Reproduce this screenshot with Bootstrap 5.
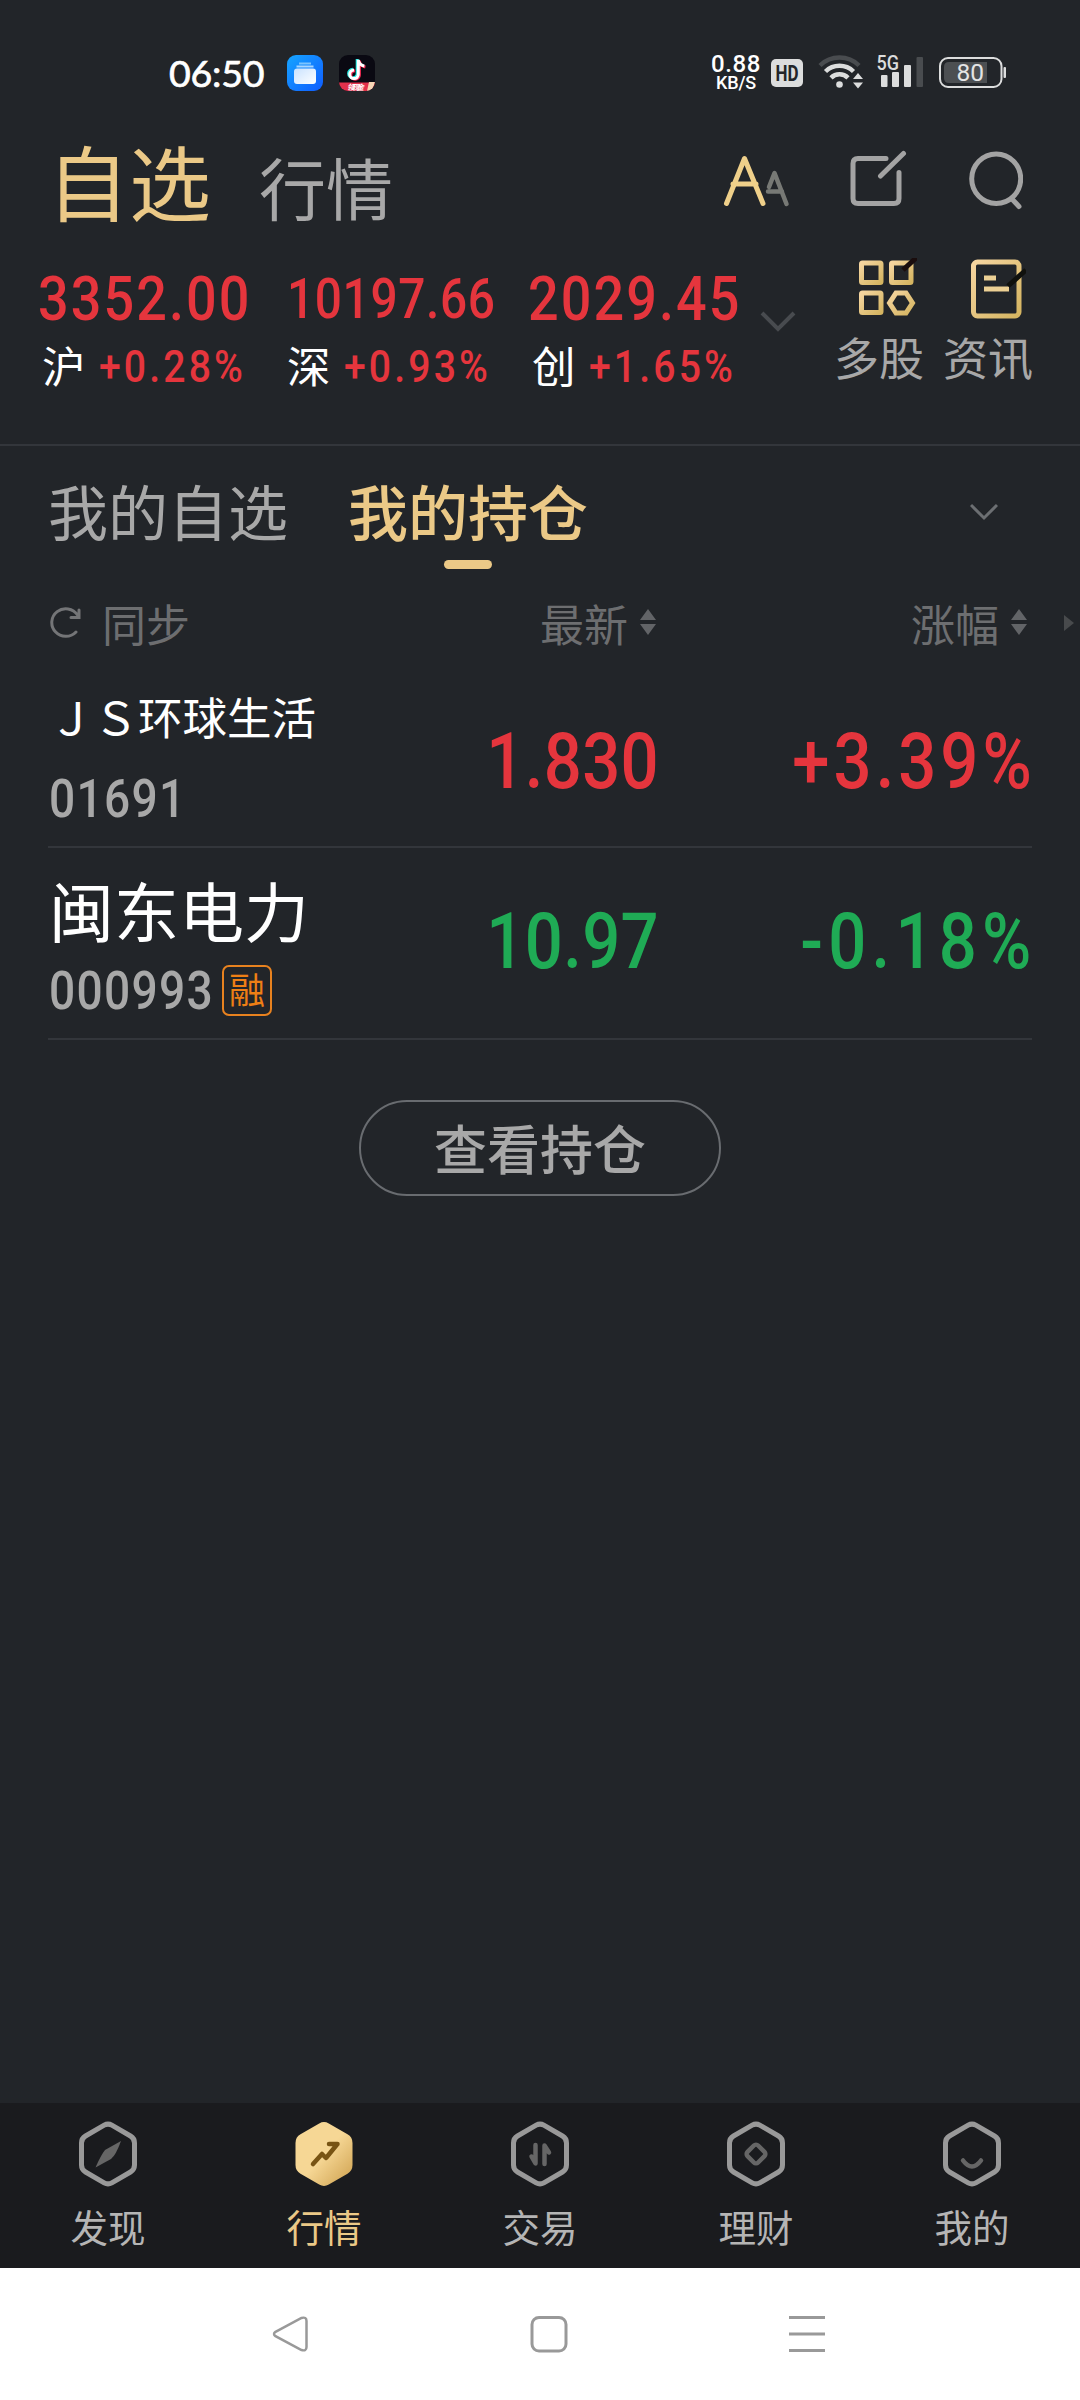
<!DOCTYPE html>
<html lang="zh-CN">
<head>
<meta charset="utf-8">
<meta name="viewport" content="width=device-width, initial-scale=1">
<title>自选</title>
<link href="https://cdn.jsdelivr.net/npm/bootstrap@5.3.0/dist/css/bootstrap.min.css" rel="stylesheet">
<script src="https://cdn.jsdelivr.net/npm/bootstrap@5.3.0/dist/js/bootstrap.bundle.min.js"></script>
<style>
:root{--gold:#ebc987;--grey:#a8a8a8;--dim:#6d6e70;--up:#e5353d;--down:#1fab55;--rule:#33363b}
body{width:1080px;height:2400px;background:#222529;color:#fff;font-family:"Noto Sans CJK SC",sans-serif;line-height:1;overflow:hidden}
svg{display:block;flex:none}
/* condensed figures */
.num{display:block;font-family:Roboto,"Liberation Sans",sans-serif;font-weight:500;white-space:nowrap;transform:scaleX(.87);transform-origin:left}
.up{color:var(--up)}.down{color:var(--down)}.gold{color:var(--gold)}.soft{color:var(--grey)}.faint{color:var(--dim)}
.status{height:120px;padding:25px 74px 0 169px}
.clock{font:400 37.5px Lato,sans-serif;width:118px;letter-spacing:-.2px;-webkit-text-stroke:.7px #fff}
.rate{font-family:Roboto,sans-serif;font-weight:500;width:60px}
.rate b{display:block;font-weight:500;font-size:24px;line-height:20px;letter-spacing:.6px}
.rate i{display:block;font-style:normal;font-size:18px;line-height:17px;letter-spacing:-.2px}
.titles{height:120px;padding:0 57px 0 47px}
.title-on{font-size:82px;font-weight:400;line-height:112px}
.title-off{font-size:67px;font-weight:400;margin-left:48px}
.indices{height:206px;border-bottom:2px solid var(--rule);padding:34px 48px 0 38px}
.idx-val{height:50px;line-height:50px}
.idx-lg{font-size:62px;letter-spacing:2.4px}
.idx-md{font-size:55px;letter-spacing:.7px}
.idx-sub{height:44px;margin-top:20px}
.idx-sub span:first-child{font-size:43.5px;width:57px;line-height:40px;margin-top:-2px}
.idx-pct{font-size:45px;letter-spacing:3.6px}
.tool{width:88px}
.tool svg{margin-left:16px}
.tool span{font-size:45px;line-height:44px;white-space:nowrap;margin:15px -2px 0}
.tabs{height:126px;padding:34px 82px 0 48px;font-size:60px}
.tab-on{font-weight:500}
.tab-bar{width:48px;height:9px;border-radius:5px;background:var(--gold);margin-top:20px}
.heads{height:104px;padding:0 6px 2px 50px;font-size:44px}
.quote{margin:0 48px;border-bottom:2px solid var(--rule);padding-left:1px}
.q-name{width:360px}
.q-code{font-size:53px;letter-spacing:1.5px;line-height:53px;width:165px}
.q-num{font-size:77px;letter-spacing:.4px;line-height:78px;transform-origin:right}
.q-price{width:250px}
.q-chg{letter-spacing:4.6px;margin-right:-4px}
.margin-tag{width:50px;height:51px;border:2px solid #e8821f;border-radius:7px;color:#ee7f15;font-size:36px;line-height:43px;margin-left:8px}
.btn-hold{width:362px;height:96px;border:2px solid #696c70;border-radius:48px;color:var(--grey);font-size:53px;font-weight:500;line-height:84px;padding:0 0 3px;margin-top:60px}
.dock{height:165px;background:#1a1b1e;padding-top:18px}
.dock span{font-size:37.5px;line-height:38px;margin-top:20px;color:#b5b5b5}
.dock .gold{color:var(--gold)}
.sysnav{height:132px;background:#fff}
</style>
</head>
<body class="d-flex flex-column">
<svg width="0" height="0" class="position-absolute">
  <defs>
    <linearGradient id="gd" x1="0" y1="0" x2="1" y2="1"><stop offset="0" stop-color="#f5d5a0"/><stop offset="1" stop-color="#d5b561"/></linearGradient>
    <linearGradient id="gh" x1="0" y1="0" x2="1" y2="1"><stop offset=".5" stop-color="#f6d795"/><stop offset="1" stop-color="#d0a351"/></linearGradient>
    <linearGradient id="bl" x1="0" y1="0" x2="1" y2="1"><stop offset="0" stop-color="#16a5ff"/><stop offset="1" stop-color="#0f5cff"/></linearGradient>
    <linearGradient id="wh" x1="0" y1="0" x2="1" y2="1"><stop offset="0" stop-color="#c9e2ff"/><stop offset="1" stop-color="#fff"/></linearGradient>
    <path id="hex" d="M26.200 4.200Q30 2 33.800 4.200L52.500 15Q56.500 17.300 56.500 22V44Q56.500 48.700 52.500 51L33.800 61.800Q30 64 26.200 61.800L7.500 51Q3.500 48.700 3.500 44V22Q3.500 17.300 7.500 15Z"/>
  </defs>
</svg>

<header class="status d-flex align-items-center">
  <div class="clock">06:50</div>
  <svg width="36" height="36" viewBox="0 0 36 36"><rect width="36" height="36" rx="9" fill="url(#bl)"/><path d="M12 8.500h12" stroke="#7cc4ff" stroke-width="2"/><path d="M9.500 11.500h17" stroke="#a9d6ff" stroke-width="2"/><rect x="7" y="13.500" width="22" height="15.500" rx="3" fill="url(#wh)"/></svg>
  <svg class="ms-3" width="36" height="36" viewBox="0 0 36 36"><defs><clipPath id="tk"><rect width="36" height="36" rx="9"/></clipPath></defs><g clip-path="url(#tk)"><rect width="36" height="36" fill="#0a0912"/>
    <g fill="none" stroke-width="3"><path stroke="#25e9e2" d="M18.200 4v14.500a4.300 4.300 0 1 1-4.300-4.300M18.200 4.500q.7 5 6 6"/><path stroke="#fb2c56" d="M20.400 5.500v14.500a4.300 4.300 0 1 1-4.300-4.300M20.400 6q.7 5 6 6"/><path stroke="#fff" d="M19.300 4.800v14.500a4.300 4.300 0 1 1-4.300-4.300M19.300 5q.7 5 6 6"/></g>
    <path d="M0 27.500h36V36H0z" fill="#e2314c"/><path d="M30 27h6l-3 9h-5z" fill="#f5d5b5"/><text x="8" y="34.500" font-size="7.500" font-style="italic" font-weight="700" fill="#fff" textLength="17">领现金</text></g></svg>
  <div class="rate ms-auto text-center"><b>0.88</b><i>KB/S</i></div>
  <svg width="240" height="40" viewBox="766 53 240 40">
    <rect x="771" y="59" width="32" height="28" rx="5" fill="#dcdddd"/><text x="787" y="81" font-family="Roboto" font-weight="700" font-size="22" fill="#222529" text-anchor="middle" textLength="23" lengthAdjust="spacingAndGlyphs">HD</text>
    <g fill="none" stroke-width="4.500"><path d="M820 65.500a28 28 0 0 1 39 0" stroke="#494c4f"/><path d="M825.500 71.500a20 20 0 0 1 28 0M831 77.800a12 12 0 0 1 17 0" stroke="#dcdddd"/></g>
    <circle cx="839.500" cy="84.500" r="3.300" fill="#dcdddd"/><path d="M853 79l5-6 5 6zM853 82.500h10l-5 6z" fill="#dcdddd"/>
    <text x="876.500" y="70" font-family="Roboto" font-weight="500" font-size="19.500" fill="#dcdddd" textLength="22.500" lengthAdjust="spacingAndGlyphs">5G</text>
    <g fill="#dcdddd"><rect x="881" y="75" width="6.500" height="12" rx="1"/><rect x="892" y="72" width="7" height="15" rx="1"/><rect x="904" y="65" width="7" height="22" rx="1"/></g><rect x="916.500" y="57" width="6.500" height="30" rx="1" fill="#494c4f"/>
    <rect x="940" y="58" width="61.500" height="29" rx="8" fill="none" stroke="#dcdddd" stroke-width="2"/><path d="M949 62h38v21h-38q-5 0-5-5V67q0-5 5-5z" fill="#4c4f52"/><rect x="1003.500" y="67" width="2.500" height="11" rx="1" fill="#dcdddd"/>
    <text x="970.300" y="81.300" font-family="Roboto" font-size="24.500" fill="#e4e4e4" text-anchor="middle">80</text>
  </svg>
</header>

<nav class="titles d-flex align-items-center">
  <div class="d-flex align-items-baseline"><span class="title-on gold">自选</span><span class="title-off soft">行情</span></div>
  <svg class="ms-auto" width="300" height="60" viewBox="723 150 300 60" fill="none" stroke-linecap="round" stroke-linejoin="round">
    <path d="M769 187l5.500-14 12 31M768 191.500h14" stroke="#777975" stroke-width="4.500"/>
    <path d="M726.500 203.500l18-45 18.500 45M733 184h23" stroke="#efd08a" stroke-width="5"/>
    <path d="M886 158.500h-28q-5 0-5 5v35q0 5 5 5h36q5 0 5-5v-26M880.500 176l23-22.500" stroke="#a3a3a3" stroke-width="5"/>
    <ellipse cx="996.200" cy="178.800" rx="24.500" ry="24.800" stroke="#a3a3a3" stroke-width="5"/><path d="M1012 199l7 7.500" stroke="#a3a3a3" stroke-width="5"/>
  </svg>
</nav>

<section class="indices d-flex">
  <div style="width:249px"><div class="idx-val num up idx-lg">3352.00</div><div class="idx-sub d-flex align-items-center ps-1"><span>沪</span><span class="num up idx-pct">+0.28%</span></div></div>
  <div style="width:241px"><div class="idx-val num up idx-md">10197.66</div><div class="idx-sub d-flex align-items-center"><span>深</span><span class="num up idx-pct">+0.93%</span></div></div>
  <div style="width:230px"><div class="idx-val num up idx-lg">2029.45</div><div class="idx-sub d-flex align-items-center ps-1"><span>创</span><span class="num up idx-pct">+1.65%</span></div></div>
  <svg width="40" height="24" viewBox="0 0 40 24" style="margin-top:35px" fill="none" stroke="#484b4f" stroke-width="4"><path d="M4 4l16 16L36 4"/></svg>
  <div class="d-flex ms-auto" style="margin-top:-16px;gap:21px">
    <div class="tool d-flex flex-column align-items-center"><svg width="60" height="62" viewBox="858 258 60 62" fill="none" stroke="url(#gd)" stroke-width="5"><rect x="862.500" y="263" width="19.500" height="19.500" rx="1"/><rect x="892.500" y="263" width="19.500" height="19.500" rx="1"/><rect x="862.500" y="293" width="19.500" height="19.500" rx="1"/><path d="M897 293h10l6.500 10-6.500 10h-10l-6.500-10z"/><path d="M904 270l14-13" stroke="#1a0d0d" stroke-width="5"/></svg><span class="soft">多股</span></div>
    <div class="tool d-flex flex-column align-items-center"><svg width="60" height="62" viewBox="966 258 60 62" fill="none" stroke="url(#gd)" stroke-width="5"><rect x="973.500" y="262" width="45.500" height="54" rx="4"/><path d="M984 275.500h12v5h-12zM984 286.500h25v5h-25z" fill="#ecd094" stroke="none"/><path d="M1008 286l18-16" stroke="#10110d" stroke-width="5"/></svg><span class="soft">资讯</span></div>
  </div>
</section>

<nav class="tabs d-flex align-items-start">
  <div class="soft">我的自选</div>
  <div class="tab-on gold d-flex flex-column align-items-center" style="margin-left:60px">我的持仓<i class="tab-bar"></i></div>
  <svg class="ms-auto" style="margin-top:23px" width="28" height="18" viewBox="0 0 28 18" fill="none" stroke="#6c6f72" stroke-width="3"><path d="M1 2l13 13L27 2"/></svg>
</nav>

<div class="heads d-flex align-items-center faint">
  <svg width="34" height="34" viewBox="0 0 34 34" style="margin-top:-1px" fill="none" stroke="#747577" stroke-width="3"><path d="M26 26a14 13.800 0 1 1 1.500-17M21 11.500h8V4" stroke-linecap="round"/></svg>
  <span style="width:391px;margin-left:18px">同步</span>
  <div class="d-flex align-items-center" style="width:418px;padding-left:47px">最新<svg width="16" height="26" viewBox="0 0 16 26" style="margin-left:12px;margin-top:-2px" fill="#626467"><path d="M0 11L8 0l8 11zM0 15h16L8 26z"/></svg></div>
  <div class="d-flex align-items-center">涨幅<svg width="16" height="26" viewBox="0 0 16 26" style="margin-left:12px;margin-top:-2px" fill="#626467"><path d="M0 11L8 0l8 11zM0 15h16L8 26z"/></svg></div>
  <svg class="ms-auto" width="10" height="16" viewBox="0 0 10 16" fill="#484a4c"><path d="M0 0l10 8-10 8z"/></svg>
</div>

<section class="quote d-flex" style="height:172px">
  <div class="q-name" style="padding-top:18px"><div style="font-size:44.500px;line-height:44px;white-space:nowrap">ＪＳ环球生活</div><div class="num soft q-code" style="margin-top:35px">01691</div></div>
  <div class="q-price" style="padding-top:47px"><div class="num up q-num text-end">1.830</div></div>
  <div class="ms-auto" style="padding-top:47px"><div class="num up q-num q-chg">+3.39%</div></div>
</section>
<section class="quote d-flex" style="height:192px">
  <div class="q-name" style="padding-top:28px"><div style="font-size:65px;line-height:66px;white-space:nowrap">闽东电力</div><div class="d-flex align-items-center" style="margin-top:20px"><span class="num soft q-code" style="padding-top:3px">000993</span><span class="margin-tag text-center">融</span></div></div>
  <div class="q-price" style="padding-top:55px"><div class="num down q-num text-end">10.97</div></div>
  <div class="ms-auto" style="padding-top:55px"><div class="num down q-num q-chg" style="letter-spacing:6px;margin-right:-5px">-0.18%</div></div>
</section>
<button class="btn btn-hold mx-auto flex-shrink-0">查看持仓</button>

<nav class="dock mt-auto d-flex flex-shrink-0">
  <div class="col d-flex flex-column align-items-center"><svg width="60" height="66"><use href="#hex" fill="none" stroke="#999" stroke-width="5"/><path d="M43 20Q38 34 33 38L17.500 46.500Q23 34 27 29z" fill="#666"/></svg><span>发现</span></div>
  <div class="col d-flex flex-column align-items-center"><svg width="60" height="66"><use href="#hex" fill="url(#gh)" stroke="url(#gh)" stroke-width="4"/><path d="M19 43l9-10 4 4 11-13.500M35 23h8.500" fill="none" stroke="#785414" stroke-width="4.500" stroke-linecap="round" stroke-linejoin="round"/></svg><span class="gold">行情</span></div>
  <div class="col d-flex flex-column align-items-center"><svg width="60" height="66"><use href="#hex" fill="none" stroke="#999" stroke-width="5"/><path d="M25.500 24v18.500l-4-7M34.500 43V24.500l4.500 7" fill="none" stroke="#666" stroke-width="4.500" stroke-linecap="round" stroke-linejoin="round"/></svg><span>交易</span></div>
  <div class="col d-flex flex-column align-items-center"><svg width="60" height="66"><use href="#hex" fill="none" stroke="#999" stroke-width="5"/><rect x="22.500" y="25.500" width="15" height="15" rx="3" transform="rotate(45 30 33)" fill="none" stroke="#666" stroke-width="4.500"/></svg><span>理财</span></div>
  <div class="col d-flex flex-column align-items-center"><svg width="60" height="66"><use href="#hex" fill="none" stroke="#999" stroke-width="5"/><path d="M21 39.500q9 12 18 0" fill="none" stroke="#666" stroke-width="4.500" stroke-linecap="round"/></svg><span>我的</span></div>
</nav>
<nav class="sysnav d-flex align-items-center flex-shrink-0" style="padding-left:272px">
  <svg width="38" height="38" fill="none" stroke="#999" stroke-width="2.500"><path d="M3.500 16.800L29.500 3q5-1.500 5 3v26q0 4.500-5 3L3.500 21.200q-3-2.200 0-4.400z"/></svg>
  <svg style="margin-left:220px" width="38" height="38" fill="none" stroke="#999" stroke-width="3"><rect x="2" y="2.500" width="34" height="33.500" rx="7"/></svg>
  <svg style="margin-left:221px" width="36" height="38" stroke="#999" stroke-width="3"><path d="M0 2.500h36M0 19h36M0 35.500h36"/></svg>
</nav>
</body>
</html>
